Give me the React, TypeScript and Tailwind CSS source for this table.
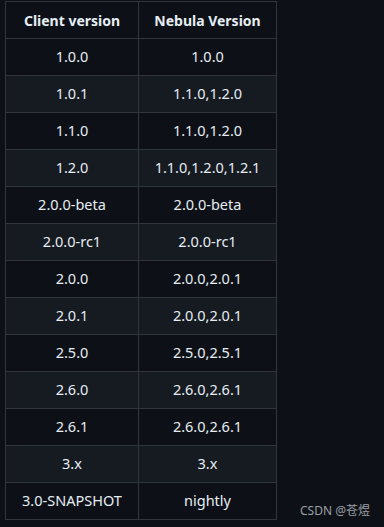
import React from "react";

const rows: [string, string][] = [
  ["1.0.0", "1.0.0"],
  ["1.0.1", "1.1.0,1.2.0"],
  ["1.1.0", "1.1.0,1.2.0"],
  ["1.2.0", "1.1.0,1.2.0,1.2.1"],
  ["2.0.0-beta", "2.0.0-beta"],
  ["2.0.0-rc1", "2.0.0-rc1"],
  ["2.0.0", "2.0.0,2.0.1"],
  ["2.0.1", "2.0.0,2.0.1"],
  ["2.5.0", "2.5.0,2.5.1"],
  ["2.6.0", "2.6.0,2.6.1"],
  ["2.6.1", "2.6.0,2.6.1"],
  ["3.x", "3.x"],
  ["3.0-SNAPSHOT", "nightly"],
];

export default function App() {
  return (
    <div
      className="relative w-[384px] h-[527px] bg-[#0d1117] pt-[1px] pl-[5px] text-[#e6edf3] text-[14.5px]"
      style={{ fontFamily: '"Noto Sans", "Open Sans", sans-serif' }}
    >
      <div className="w-[272px] border-l border-t border-[#30363d]">
        <div className="flex h-[37px] border-b border-[#30363d] font-bold bg-[#0d1117] text-[14px]">
          <div className="w-[133px] border-r border-[#30363d] flex items-center justify-center">Client version</div>
          <div className="w-[138px] border-r border-[#30363d] flex items-center justify-center">Nebula Version</div>
        </div>
        {rows.map(([a, b], i) => (
          <div
            key={i}
            className={
              "flex h-[37px] border-b border-[#30363d] " +
              (i % 2 === 1 ? "bg-[#161b22]" : "bg-[#0d1117]")
            }
          >
            <div className="w-[133px] border-r border-[#30363d] flex items-center justify-center">{a}</div>
            <div className="w-[138px] border-r border-[#30363d] flex items-center justify-center">{b}</div>
          </div>
        ))}
      </div>
      <div
        className="absolute left-[300px] top-[502px] text-[12px] text-[#9a9ea5] leading-[18px]"
        style={{ fontFamily: '"Noto Sans", "Noto Sans CJK SC", sans-serif' }}
      >
        CSDN @苍煜
      </div>
    </div>
  );
}
